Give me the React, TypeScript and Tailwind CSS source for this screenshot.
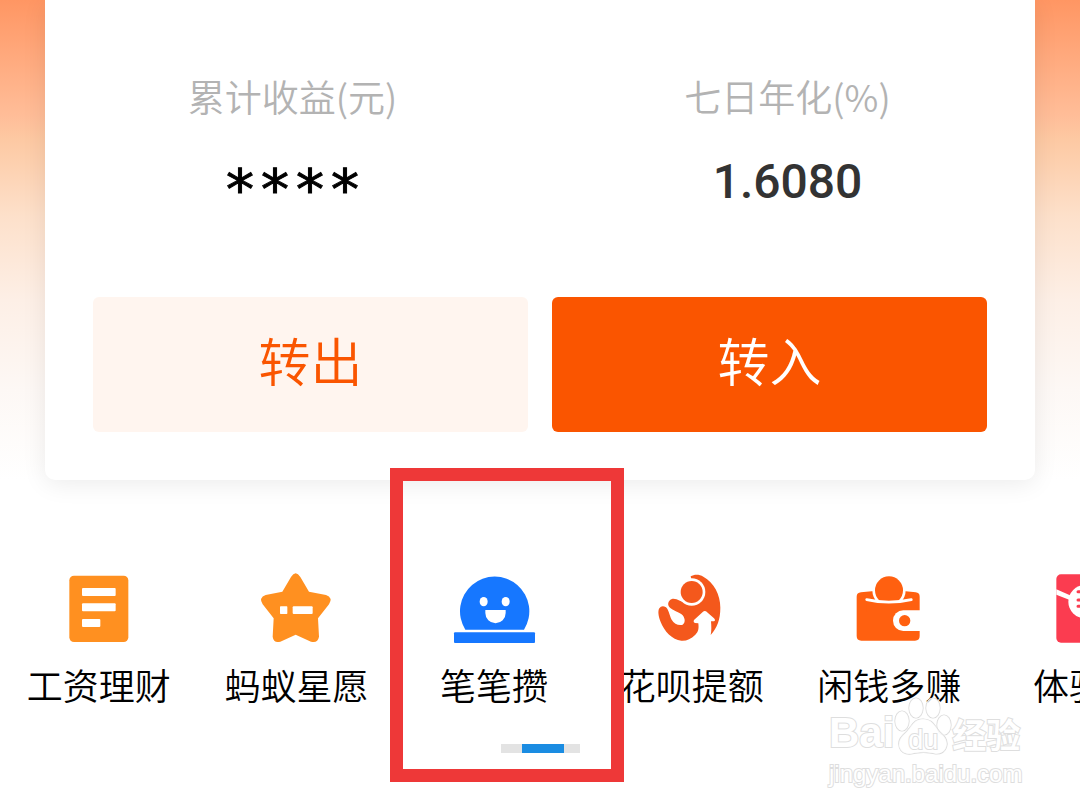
import type { ReactNode } from "react";

function Glyph({ children }: { children: ReactNode }) {
  return (
    <svg viewBox="0 0 288 252" className="h-[84px] w-24" aria-hidden="true">
      {children}
    </svg>
  );
}

const services: { name: string; icon: ReactNode }[] = [
  {
    name: "工资理财",
    icon: (
      <Glyph>
        <rect x="55" y="29" width="177" height="199" rx="14" fill="#ff9020" />
        <g fill="#fff">
          <rect x="93" y="66" width="101" height="24" rx="3" />
          <rect x="93" y="112" width="101" height="24" rx="3" />
          <rect x="93" y="159" width="55" height="24" rx="3" />
        </g>
      </Glyph>
    ),
  },
  {
    name: "蚂蚁星愿",
    icon: (
      <Glyph>
        <path
          d="M129 33Q143 11 157 33L183 77L234 87Q256 95 243 115L210 157L213 212Q209 233 189 227L143 206L97 227Q77 233 74 212L77 157L44 115Q31 95 53 87L103 77Z"
          fill="#ff9020"
        />
        <rect x="96" y="121" width="22" height="23" rx="2" fill="#fff" />
        <rect x="134" y="121" width="60" height="23" rx="3" fill="#fff" />
      </Glyph>
    ),
  },
  {
    name: "笔笔攒",
    icon: (
      <Glyph>
        <path d="M58 191A104 104 0 1 1 234 191Z" fill="#1677ff" />
        <rect x="24" y="199" width="243" height="32" rx="3" fill="#1677ff" />
        <g fill="#fff">
          <ellipse cx="113" cy="107" rx="12" ry="14" />
          <ellipse cx="179" cy="107" rx="12" ry="14" />
          <path d="M118 132H179V141A30.500 30.500 0 0 1 118 141Z" />
        </g>
      </Glyph>
    ),
  },
  {
    name: "花呗提额",
    icon: (
      <Glyph>
        <path
          d="M140 31C150 25 165 24 178 32C210 50 229 85 229 125C229 160 220 185 200 207C203 195 202 180 201 166L210 166Q216 164 210 157L186 136Q181 133 177 137L150 162Q147 169 153 171L163 172C165 188 163 198 154 206C140 219 128 225 112 224C85 222 60 195 50 168C43 150 41 135 46 127Q53 117 66 124C74 130 76 148 83 161C90 174 105 180 116 176C124 171 124 158 116 148C108 138 95 138 78 125C68 117 73 102 84 99C98 96 112 110 130 112L150 80Z"
          fill="#f4581c"
        />
        <circle cx="143" cy="78" r="41" fill="#fff" />
        <circle cx="143" cy="78" r="33" fill="#f4581c" />
      </Glyph>
    ),
  },
  {
    name: "闲钱多赚",
    icon: (
      <Glyph>
        <path
          d="M47 92Q47 80 60 79L100 75H187L224 79Q236 80 236 92V210Q236 224 222 224H61Q47 224 47 210Z"
          fill="#ff6010"
        />
        <circle cx="144" cy="73" r="50" fill="#fff" />
        <circle cx="144" cy="73" r="42" fill="#ff6010" />
        <path d="M77 101Q143 116 211 101V140H77Z" fill="#ff6010" />
        <path
          d="M77 101Q143 116 211 101"
          fill="none"
          stroke="#fff"
          strokeWidth="8"
          strokeLinecap="round"
        />
        <path d="M240 133H187A31 31 0 0 0 187 195H240Z" fill="#fff" />
        <circle cx="191" cy="164" r="17" fill="#ff6010" />
      </Glyph>
    ),
  },
  {
    name: "体验金",
    icon: (
      <Glyph>
        <rect x="52" y="25" width="190" height="205" rx="14" fill="#fb3c50" />
        <path d="M52 70L98 90V104L52 86Z" fill="#fff" />
        <circle cx="138" cy="107" r="50" fill="#fff" />
        <path
          d="M117 77H160M117 102H160M117 121H160"
          stroke="#fb3c50"
          strokeWidth="9"
          strokeLinecap="round"
        />
      </Glyph>
    ),
  },
];

function Watermark() {
  return (
    <div className="pointer-events-none absolute top-[694px] left-[829px] font-['Liberation_Sans','Noto_Sans_CJK_SC',sans-serif] text-white [-webkit-text-stroke:2px_#dedede] [paint-order:stroke_fill]">
      <div className="flex h-[62px] items-end">
        <span className="text-[42px] leading-[46px] font-bold">Bai</span>
        <div className="relative h-[62px] w-[58px]">
          <svg viewBox="0 0 58 62" className="h-full w-full" aria-hidden="true">
            <g fill="#fff" fillOpacity="0.7" stroke="#d8d8d8" strokeWidth="1.200">
              <ellipse cx="8" cy="27" rx="7" ry="10" />
              <ellipse cx="22" cy="14" rx="7" ry="10" />
              <ellipse cx="39" cy="14" rx="7" ry="10" />
              <ellipse cx="50" cy="31" rx="7" ry="10" />
              <path d="M29 25C40 25 41 34 48 40C57 48 53 60 42 60C34 58 25 58 17 60C5 61 1 49 9 41C18 34 18 25 29 25Z" />
            </g>
          </svg>
          <span className="absolute inset-x-0 top-8 text-center text-[27px] leading-7">du</span>
        </div>
        <span className="text-[34px] leading-[40px] font-bold">经验</span>
      </div>
      <div className="pt-1 text-2xl leading-7">jingyan.baidu.com</div>
    </div>
  );
}

export default function App() {
  return (
    <main className="relative min-h-screen overflow-hidden bg-white font-['Noto_Sans_CJK_SC',sans-serif]">
      <div className="bg-[linear-gradient(to_bottom,#ff9663_0px,#ffbd98_115px,#fdc9a3_140px,#fde0ca_215px,#fdefe6_300px,#fdf8f5_390px,#ffffff_480px)] px-[45px]">
        <section className="rounded-b-[10px] bg-white pt-[72px] pb-12 shadow-[0_4px_24px_rgba(0,0,0,0.08)]">
          <dl className="grid grid-cols-2 text-center">
            <div>
              <dt className="text-[37px] leading-[48px] font-[350] text-[#b3b3b3]">累计收益(元)</dt>
              <dd className="mt-8 flex h-[60px] justify-center gap-[7px] pt-2 font-['DejaVu_Sans',sans-serif] text-[56px] leading-[60px] text-black [-webkit-text-stroke:1px_#000]">
                <span>*</span>
                <span>*</span>
                <span>*</span>
                <span>*</span>
              </dd>
            </div>
            <div>
              <dt className="text-[37px] leading-[48px] font-[350] text-[#b3b3b3]">七日年化(%)</dt>
              <dd className="mt-8 font-[Roboto,sans-serif] text-[48px] leading-[60px] font-medium text-[#333333]">
                1.6080
              </dd>
            </div>
          </dl>
          <div className="mt-[85px] grid grid-cols-2 gap-6 px-12">
            <button
              type="button"
              className="h-[135px] rounded-md bg-[#fff5ef] pb-2.5 text-[52px] leading-[60px] font-[350] text-[#fa5500]"
            >
              转出
            </button>
            <button
              type="button"
              className="h-[135px] rounded-md bg-[#fa5500] pb-2.5 text-[52px] leading-[60px] font-[350] text-white"
            >
              转入
            </button>
          </div>
        </section>
      </div>

      <nav className="mt-[86px]">
        <ul className="flex overflow-x-clip">
          {services.map((service) => (
            <li key={service.name} className="w-[18.3%] shrink-0">
              <a href="#" className="flex flex-col items-center">
                {service.icon}
                <span className="mt-2 text-4xl leading-[52px] font-[350] whitespace-nowrap text-black">
                  {service.name}
                </span>
              </a>
            </li>
          ))}
        </ul>
        <div className="mx-auto mt-[34px] flex h-[9px] w-[79px] bg-[#e3e3e3] pl-[21px]">
          <div className="w-[42px] bg-[#1a8ce2]" />
        </div>
      </nav>

      <div className="pointer-events-none absolute top-[468px] left-[390px] h-[314px] w-[234px] border-[13px] border-[#ee3838]" />
      <Watermark />
    </main>
  );
}
